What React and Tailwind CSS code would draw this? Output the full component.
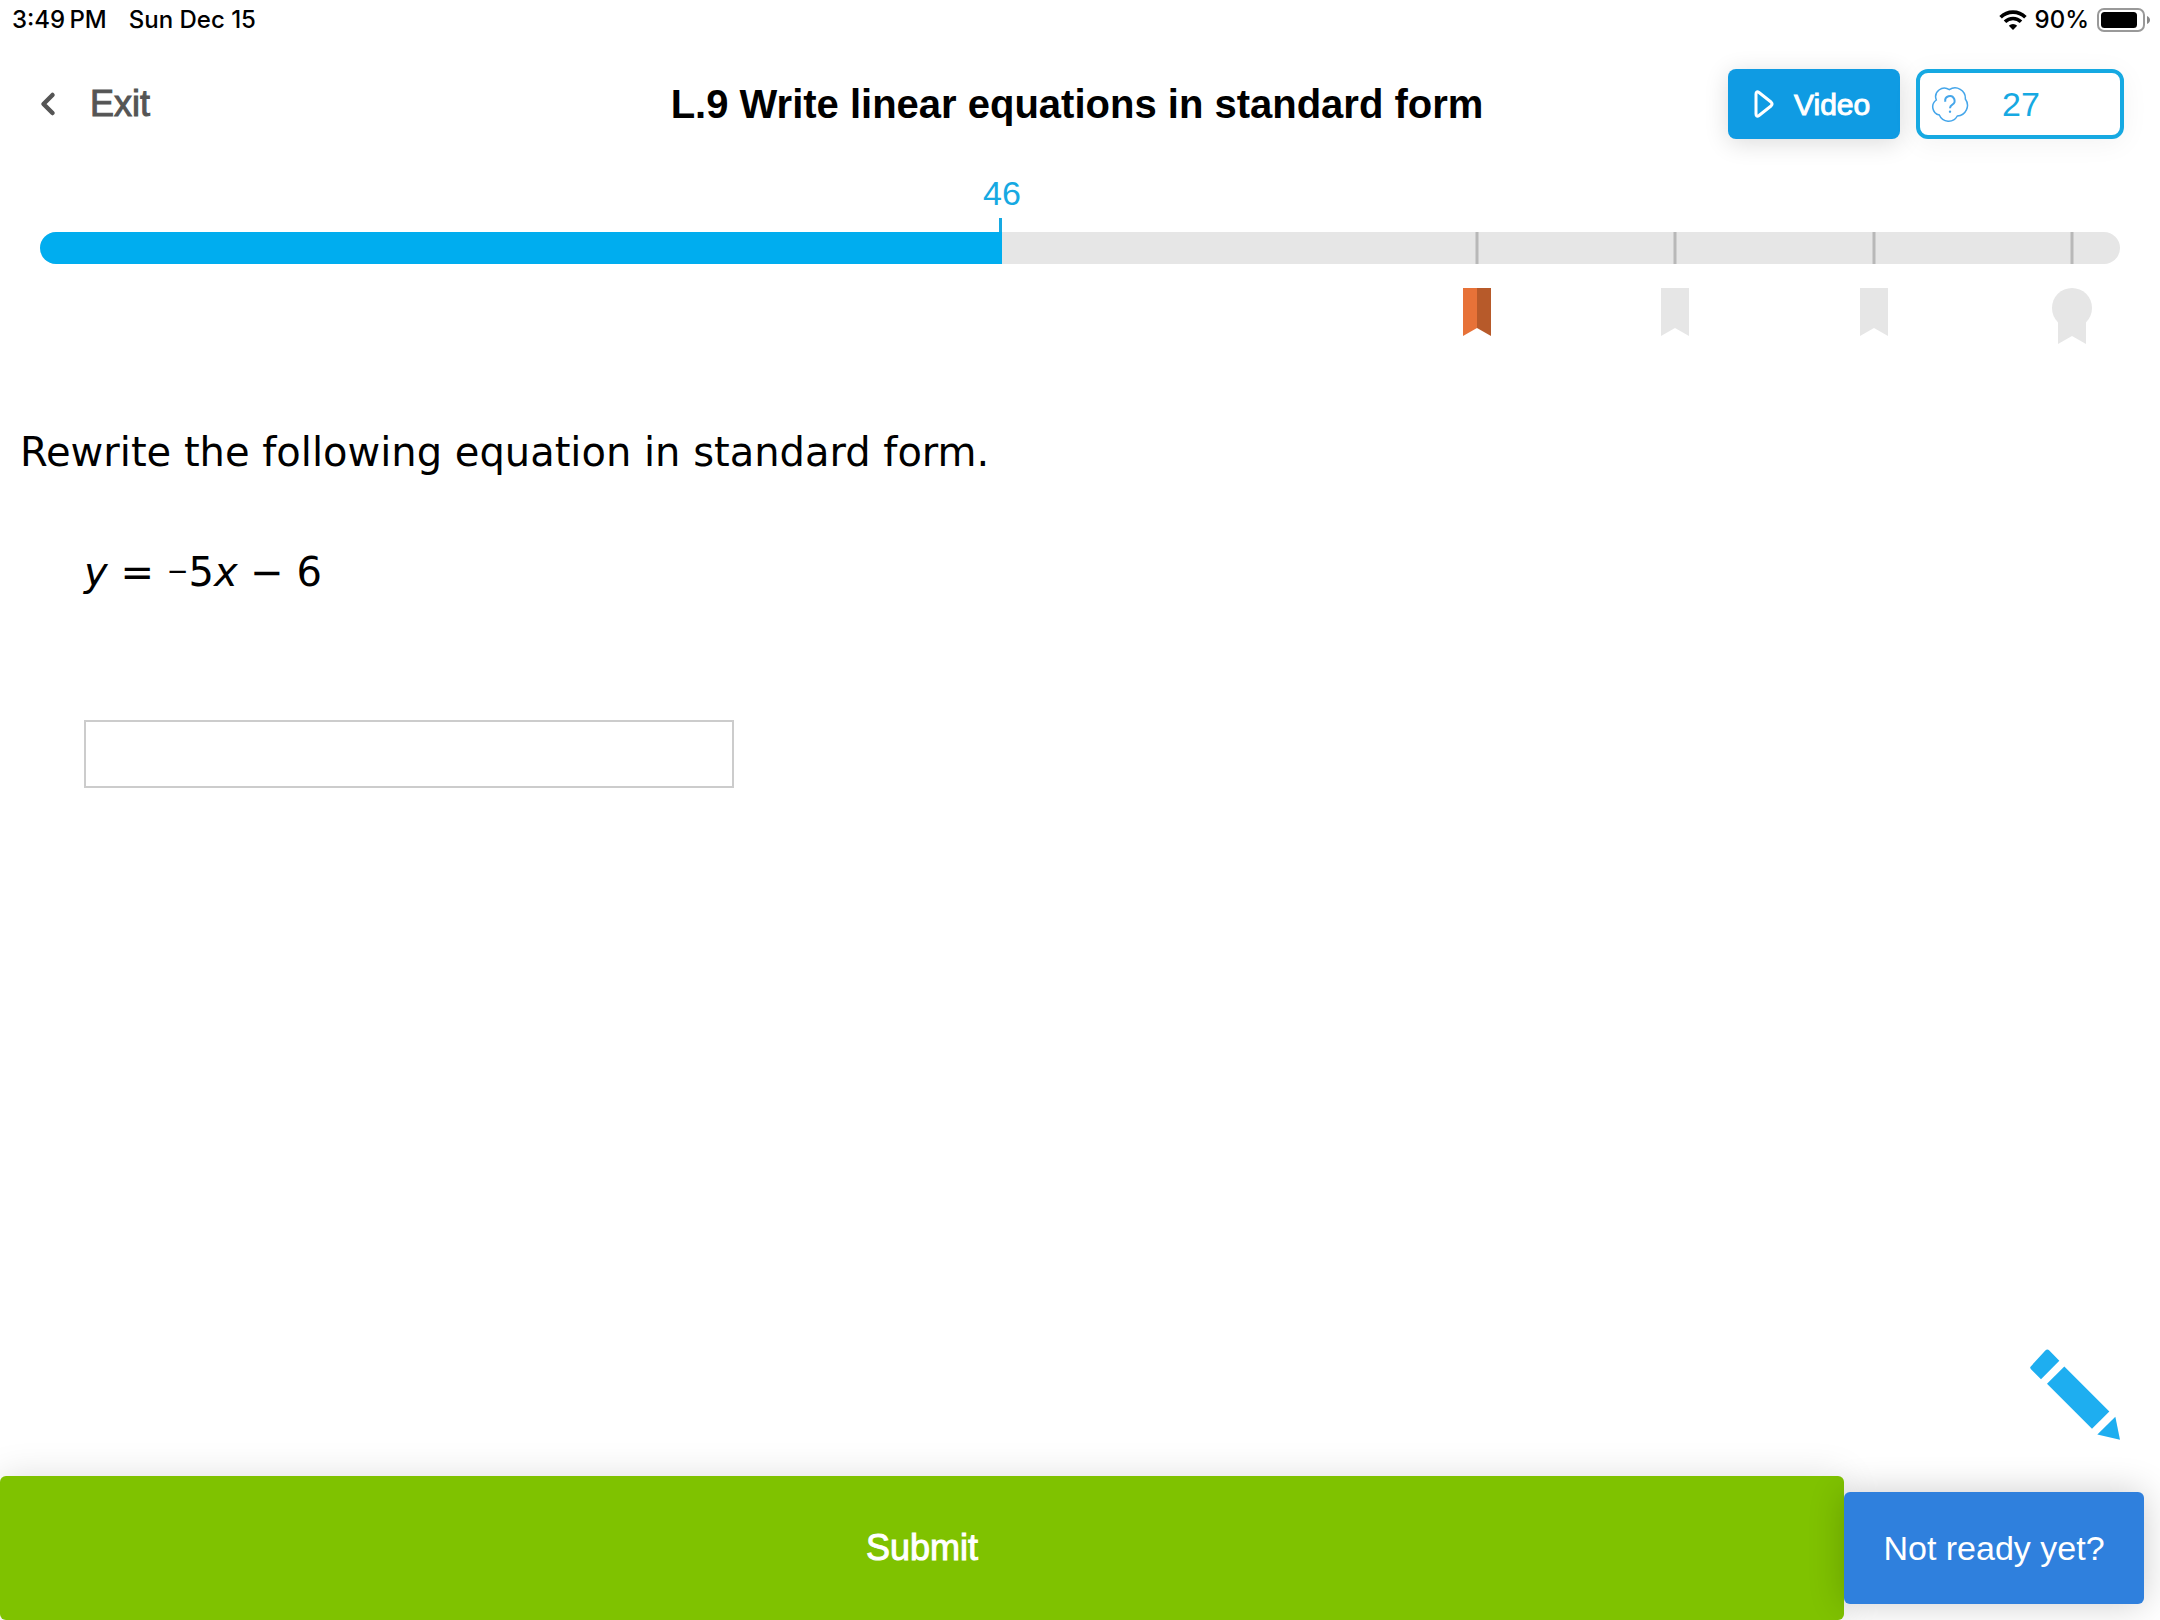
import { ChevronLeft } from 'lucide-react'

function Wifi() {
  return (
    <svg className="w-7 h-5" viewBox="0 0 28 20" fill="none" stroke="#000" strokeWidth="3.6">
      <path d="M1.6 7.2a17.6 17.6 0 0 1 24.8 0" />
      <path d="M6 11.8a11.4 11.4 0 0 1 16 0" />
      <path d="M14 20l-4.2-4.3a6 6 0 0 1 8.4 0z" fill="#000" stroke="none" />
    </svg>
  )
}

function Battery() {
  return (
    <svg className="w-[53px] h-6" viewBox="0 0 53 24">
      <rect x="1" y="1" width="46" height="22" rx="6" fill="none" stroke="#999" strokeWidth="2" />
      <rect x="4" y="4" width="36" height="16" rx="3.5" />
      <path d="M50 8c4 1.5 4 6.5 0 8z" fill="#888" />
    </svg>
  )
}

function QuestionBubble() {
  return (
    <svg className="w-10 h-9" viewBox="30 24 120 108" fill="none" stroke="#45a6ea" strokeWidth="4.5">
      <path d="M49 66A26 26 0 0 1 88 35A31 31 0 0 1 136 63A32 32 0 0 1 112 114A30 30 0 0 1 58 111A25 25 0 0 1 49 66z" />
      <path d="M76 71A14 14 0 1 1 97 80Q90 84 90 91" strokeWidth="6" />
      <circle cx="90" cy="101" r="3.5" fill="#45a6ea" stroke="none" />
    </svg>
  )
}

function Ribbon({ earned }) {
  return (
    <svg className="w-7 h-12" viewBox="0 0 28 48">
      <path d="M0 0h14v40L0 48z" fill={earned ? '#e77238' : '#e6e6e6'} />
      <path d="M14 0h14v48l-14-8z" fill={earned ? '#b75a2a' : '#e6e6e6'} />
    </svg>
  )
}

function Medal() {
  return (
    <svg className="w-10 h-14" viewBox="0 0 40 56" fill="#e6e6e6">
      <circle cx="20" cy="20" r="20" />
      <path d="M6 30h28v26l-14-8-14 8z" />
    </svg>
  )
}

function Pencil() {
  return (
    <svg className="w-[90px] h-[91px]" viewBox="0 0 270 272" fill="#1eaef0">
      <path d="M3 51 L46 4 Q52-2 58 4 L88 35 L33 90 L3 60 Q-2 55 3 51z" />
      <path d="M103 52L238 187L186 239L51 104z" />
      <path d="M256 203L270 272L202 256z" />
    </svg>
  )
}

// column edges: current score, then the 70 / 80 / 90 / 100 milestones
const COLS = 'grid grid-cols-[962fr_475fr_198fr_199fr_198fr_48fr]'
const MARK = 'justify-self-end translate-x-1/2'

export default function App() {
  return (
    <div className="min-h-screen flex flex-col bg-white text-black font-['Liberation_Sans',Arial,sans-serif]">
      <div className="h-10 pl-3 pr-2.5 flex items-center justify-between font-['Inter',sans-serif] font-medium text-2xl leading-6">
        <div className="flex gap-[22px]">
          <span>3:49{'\u2009'}PM</span>
          <span>Sun Dec 15</span>
        </div>
        <div className="flex items-center gap-2">
          <Wifi />
          <span>90%</span>
          <Battery />
        </div>
      </div>

      <header className="h-32 pl-[30px] pr-9 grid grid-cols-[1fr_auto_1fr] items-center">
        <button className="flex items-center gap-6 text-4xl text-[#555] [-webkit-text-stroke:1px]">
          <ChevronLeft className="size-9" strokeWidth={3} />
          Exit
        </button>
        <h1 className="text-[40px] leading-12 font-bold">L.9 Write linear equations in standard form</h1>
        <div className="flex justify-end gap-4">
          <button className="w-[172px] h-[70px] pl-[26px] flex items-center gap-5 rounded-lg bg-[#0f9be3] text-white text-[30px] [-webkit-text-stroke:1px] shadow-[0_4px_24px_rgba(0,0,0,0.14)]">
            <svg className="w-5 h-7" viewBox="0 0 20 28" fill="none" stroke="#fff" strokeWidth="3" strokeLinejoin="round">
              <path d="M2 4c0-2 1-3 3-1.5l12 9.500q2 2 0 4l-12 9.500c-2 1.500-3 .5-3-1.500z" />
            </svg>
            Video
          </button>
          <button className="w-52 h-[70px] pl-2.5 flex items-center gap-8 rounded-xl border-4 border-[#16a9e2] bg-white text-[34px] text-[#16a9e2] shadow-[0_4px_28px_rgba(0,0,0,0.05)]">
            <QuestionBubble />
            27
          </button>
        </div>
      </header>

      <section className="px-10">
        <div className={COLS}>
          <span className={`${MARK} text-[34px] leading-[50px] text-[#16a9e2]`}>46</span>
        </div>
        <div className={COLS}>
          <span className="justify-self-end w-[3px] h-[14px] bg-[#16a9e2]" />
        </div>
        <div className={`${COLS} h-8 rounded-full overflow-hidden bg-[#e6e6e6]`}>
          <span className="bg-[#00adef]" />
          <span className={`${MARK} w-[3px] bg-[#b8b8b8]`} />
          <span className={`${MARK} w-[3px] bg-[#b8b8b8]`} />
          <span className={`${MARK} w-[3px] bg-[#b8b8b8]`} />
          <span className={`${MARK} w-[3px] bg-[#b8b8b8]`} />
        </div>
        <div className={`${COLS} mt-6`}>
          <span />
          <span className={MARK}><Ribbon earned /></span>
          <span className={MARK}><Ribbon /></span>
          <span className={MARK}><Ribbon /></span>
          <span className={MARK}><Medal /></span>
        </div>
      </section>

      <main className="flex-1 px-5 pt-20 font-['DejaVu_Sans',Verdana,sans-serif] text-[40px] leading-14">
        <p>Rewrite the following equation in standard form.</p>
        <div className="pl-16 pt-16">
          <p>
            <i>y</i> = <span className="align-text-top text-[26px] leading-11">−</span>5<i>x</i> − 6
          </p>
          <input aria-label="Answer" className="block mt-30 w-[650px] h-[68px] px-4 border-2 border-[#ccc] bg-white" />
        </div>
      </main>

      <div className="flex justify-end pr-10 pb-9">
        <button aria-label="Scratchpad"><Pencil /></button>
      </div>
      <footer className="flex items-center pr-4">
        <button className="flex-1 h-36 rounded-md bg-[#7fc200] text-white text-4xl [-webkit-text-stroke:1px] shadow-[0_0_36px_rgba(0,0,0,0.13)]">Submit</button>
        <button className="w-[300px] h-28 rounded-md bg-[#2f80dd] text-white text-[34px] shadow-[0_0_36px_rgba(0,0,0,0.2)]">Not ready yet?</button>
      </footer>
    </div>
  )
}
